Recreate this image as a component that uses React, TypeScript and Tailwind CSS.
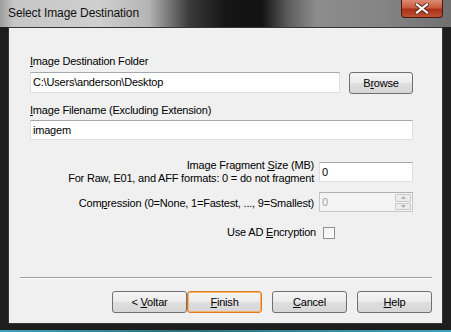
import React from "react";

function Btn({ children, focused = false }: { children: React.ReactNode; focused?: boolean }) {
  return (
    <div
      className={`h-[22px] w-[75px] rounded-[3px] border ${
        focused ? "border-[#e07b24] ring-1 ring-inset ring-[#f6b36b]" : "border-[#707070]"
      } bg-[linear-gradient(180deg,#f4f4f4_0%,#ececec_48%,#dedede_52%,#d6d6d6_100%)] flex items-center justify-center text-[11px] text-black`}
    >
      <span>{children}</span>
    </div>
  );
}

export default function App() {
  return (
    <div className="w-[451px] h-[332px] bg-[#1e1e1e] flex flex-col overflow-hidden font-['Liberation_Sans',Arial,sans-serif] text-black">
      {/* Title bar */}
      <div className="relative h-[27px] shrink-0 bg-[linear-gradient(90deg,#9c9c9c_0%,#c6c6c6_3%,#cfcfcf_22%,#b4b4b4_33%,#3a3a3a_42%,#151515_50%,#121212_58%,#5e5e5e_64%,#8c8c8c_70%,#848484_85%,#707070_100%)]">
        <div className="pl-[8px] pt-[5px] text-[12px] leading-[16px] tracking-[-0.1px] text-[#111]">Select Image Destination</div>
        <div className="absolute right-[8px] top-0 w-[42px] h-[18px] rounded-b-[4px] border border-t-0 border-[#4a1a10] bg-[linear-gradient(180deg,#dc8a74_0%,#c95a40_45%,#a9301a_55%,#bf5232_100%)] flex items-center justify-center">
          <svg width="14" height="11" viewBox="0 0 14 11">
            <path d="M2 1.5 L12 9.5 M12 1.5 L2 9.5" stroke="#5a2418" strokeWidth="4" strokeLinecap="square" />
            <path d="M2 1.5 L12 9.5 M12 1.5 L2 9.5" stroke="#ffffff" strokeWidth="2.2" strokeLinecap="square" />
          </svg>
        </div>
      </div>

      {/* Client area */}
      <div className="mx-[8px] h-[297px] shrink-0 bg-[#f0f0f0] border border-[#353535] flex flex-col text-[11px] leading-[13px] tracking-[-0.2px]">
        <div className="pl-[21px] pr-[29px] flex flex-col">
          <div className="mt-[27px]">
            <span className="underline">I</span>mage Destination Folder
          </div>
          <div className="mt-[4px] flex items-start">
            <div className="w-[310px] h-[21px] bg-white border border-[#dcdfe5] border-t-[#a4a7ae] flex items-center pl-[2px]">
              C:\Users\anderson\Desktop
            </div>
            <div className="ml-[9px] w-[64px] h-[22px] rounded-[3px] border border-[#707070] bg-[linear-gradient(180deg,#f4f4f4_0%,#ececec_48%,#dedede_52%,#d6d6d6_100%)] flex items-center justify-center">
              <span>
                B<span className="underline">r</span>owse
              </span>
            </div>
          </div>

          <div className="mt-[10px]">
            <span className="underline">I</span>mage Filename (Excluding Extension)
          </div>
          <div className="mt-[3px] h-[20px] bg-white border border-[#dcdfe5] border-t-[#a4a7ae] flex items-center pl-[2px]">
            imagem
          </div>

          <div className="mt-[19px] flex items-start">
            <div className="flex-1 text-right">
              <div>
                Image Fragment <span className="underline">S</span>ize (MB)
              </div>
              <div>For Raw, E01, and AFF formats: 0 = do not fragment</div>
            </div>
            <div className="ml-[5px] mt-[3px] w-[94px] h-[20px] bg-white border border-[#dcdfe5] border-t-[#a4a7ae] flex items-center pl-[2px]">
              0
            </div>
          </div>

          <div className="mt-[7px] flex items-start">
            <div className="flex-1 text-right mt-[5px]">
              Com<span className="underline">p</span>ression (0=None, 1=Fastest, ..., 9=Smallest)
            </div>
            <div className="ml-[5px] w-[94px] h-[20px] bg-[#f4f4f4] border border-[#c4c7cc] border-t-[#adb0b6] flex items-center pl-[2px] text-[#a3a3a3]">
              <span className="flex-1">0</span>
              <div className="w-[17px] h-full flex flex-col gap-[1px] py-[1px] pr-[1px]">
                <div className="flex-1 rounded-[1px] border border-[#c9c9c9] bg-[#ececec] flex items-center justify-center">
                  <svg width="5" height="3" viewBox="0 0 5 3">
                    <path d="M0 3 L2.5 0 L5 3 Z" fill="#b0b0b0" />
                  </svg>
                </div>
                <div className="flex-1 rounded-[1px] border border-[#c9c9c9] bg-[#ececec] flex items-center justify-center">
                  <svg width="5" height="3" viewBox="0 0 5 3">
                    <path d="M0 0 L2.5 3 L5 0 Z" fill="#b0b0b0" />
                  </svg>
                </div>
              </div>
            </div>
          </div>

          <div className="mt-[14px] flex items-center justify-end pr-[78px]">
            <span>
              Use AD <span className="underline">E</span>ncryption
            </span>
            <div className="ml-[7px] w-[12px] h-[12px] border border-[#8e8f8f] bg-[linear-gradient(135deg,#f0f0f0,#ffffff)]" />
          </div>
        </div>

        <div className="ml-[11px] mr-[10px] mt-[38px] border-t border-[#a0a0a0] border-b border-b-white" />

        <div className="mt-[12px] pl-[103px] flex gap-0">
          <Btn>
            &lt; <span className="underline">V</span>oltar
          </Btn>
          <Btn focused>
            <span className="underline">F</span>inish
          </Btn>
          <div className="ml-[10px]">
            <Btn>
              <span className="underline">C</span>ancel
            </Btn>
          </div>
          <div className="ml-[10px]">
            <Btn>
              <span className="underline">H</span>elp
            </Btn>
          </div>
        </div>
      </div>

      {/* Bottom frame */}
      <div className="flex-1 flex flex-col justify-end">
        <div className="h-[2px] bg-[linear-gradient(90deg,#3aa7b8,#2b6f7c_40%,#3aa7b8)]" />
      </div>
    </div>
  );
}
